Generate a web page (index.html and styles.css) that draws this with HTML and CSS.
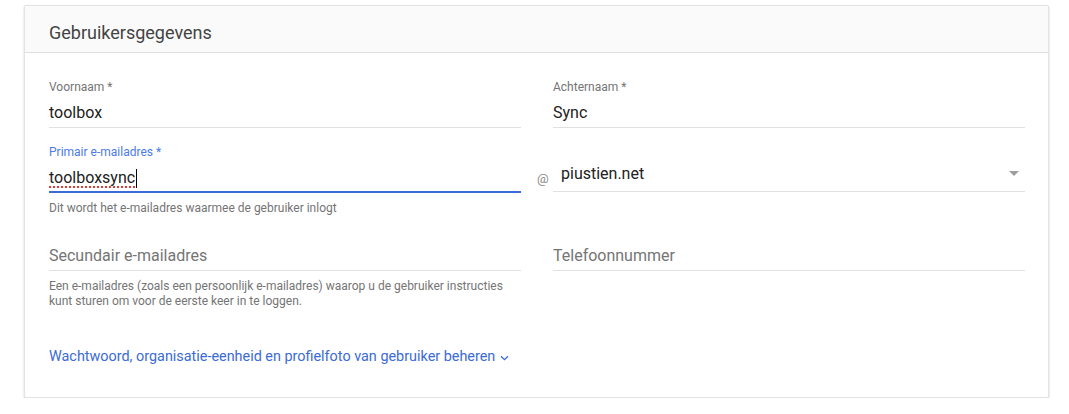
FILE: index.html
```html
<!DOCTYPE html>
<html lang="nl">
<head>
<meta charset="utf-8">
<title>Gebruikersgegevens</title>
<link rel="stylesheet" href="styles.css">
</head>
<body>
<div class="page">
  <section class="card">
    <header class="card-header">
      <h2 class="card-title">Gebruikersgegevens</h2>
    </header>
    <div class="card-body">
      <div class="row row-names">
        <div class="field">
          <div class="label">Voornaam *</div>
          <div class="control"><span class="value">toolbox</span></div>
        </div>
        <div class="field">
          <div class="label">Achternaam *</div>
          <div class="control"><span class="value">Sync</span></div>
        </div>
      </div>

      <div class="row row-email">
        <div class="field">
          <div class="label label-focus">Primair e-mailadres *</div>
          <div class="control control-focus"><span class="value misspelled">toolboxsync</span><span class="caret"></span></div>
          <div class="helper">Dit wordt het e-mailadres waarmee de gebruiker inlogt</div>
        </div>
        <div class="field field-domain">
          <span class="at">@</span>
          <div class="control control-select">
            <span class="value">piustien.net</span>
            <span class="triangle"></span>
          </div>
        </div>
      </div>

      <div class="row row-secondary">
        <div class="field">
          <div class="control"><span class="placeholder">Secundair e-mailadres</span></div>
          <div class="helper helper-multi">Een e-mailadres (zoals een persoonlijk e-mailadres) waarop u de gebruiker instructies kunt sturen om voor de eerste keer in te loggen.</div>
        </div>
        <div class="field">
          <div class="control"><span class="placeholder">Telefoonnummer</span></div>
        </div>
      </div>

      <a class="more-link" href="#">Wachtwoord, organisatie-eenheid en profielfoto van gebruiker beheren<svg class="chevron" width="9" height="6" viewBox="0 0 9 6"><path d="M1 1.2 L4.5 4.6 L8 1.2" fill="none" stroke="currentColor" stroke-width="1.3"/></svg></a>
    </div>
  </section>
</div>
</body>
</html>
```

FILE: styles.css
```css
* { box-sizing: border-box; }

html, body {
  margin: 0;
  padding: 0;
  background: #ffffff;
}

body {
  font-family: Roboto, "Noto Sans", Arial, sans-serif;
  color: #212121;
}

.page {
  padding: 5px 20px 0 24px;
}

.card {
  width: 1025px;
  background: #ffffff;
  border: 1px solid #e3e3e3;
  border-radius: 2px;
  box-shadow: 0 1px 2px rgba(0, 0, 0, 0.22);
}

.card-header {
  height: 47px;
  background: #fafafa;
  border-bottom: 1px solid #e0e0e0;
  padding: 16px 24px 0;
}

.card-title {
  margin: 0;
  font-size: 18px;
  line-height: 21px;
  font-weight: 400;
  color: #444444;
}

.card-body {
  padding: 26px 23px 30px 24px;
}

.row {
  display: grid;
  grid-template-columns: 472px 472px;
  column-gap: 32px;
  align-items: start;
}

.row-email { margin-top: 16px; }
.row-secondary { margin-top: 22px; }

.label {
  font-size: 12px;
  line-height: 16px;
  color: #757575;
}

.label-focus { color: #4b7be5; }

.control {
  display: flex;
  align-items: center;
  padding: 8px 0 4px;
  height: 33px;
  border-bottom: 1px solid #e0e0e0;
  font-size: 16px;
  line-height: 20px;
}

.value { color: #212121; }

.control-focus {
  height: 33px;
  padding-bottom: 3px;
  border-bottom: 2px solid #3b6bd6;
}

.misspelled {
  text-decoration: underline dotted #e53935;
  text-decoration-thickness: 2px;
  text-underline-offset: 3px;
}

.caret {
  display: inline-block;
  width: 1px;
  height: 19px;
  background: #000000;
  margin-left: 1px;
}

.placeholder { color: #757575; }

.helper {
  margin-top: 7px;
  font-size: 12px;
  line-height: 16px;
  color: #757575;
}

.helper-multi {
  margin-top: 8px;
  line-height: 15px;
}

.field-domain {
  display: flex;
  align-items: flex-end;
  padding-top: 16px;
}

.at {
  margin-left: -16px;
  width: 16px;
  font-size: 13px;
  line-height: 16px;
  color: #8a8a8a;
  padding-bottom: 5px;
}

.control-select {
  flex: 1;
  padding: 4px 6px 7px 8px;
  height: 32px;
  justify-content: space-between;
}

.triangle {
  width: 0;
  height: 0;
  border-left: 5px solid transparent;
  border-right: 5px solid transparent;
  border-top: 5px solid #9e9e9e;
  margin-bottom: 2px;
}

.more-link {
  display: inline-flex;
  align-items: center;
  margin-top: 38px;
  font-size: 14.4px;
  line-height: 20px;
  color: #3b6bd6;
  text-decoration: none;
}

.chevron {
  margin-left: 5px;
  margin-top: 2px;
}
```
